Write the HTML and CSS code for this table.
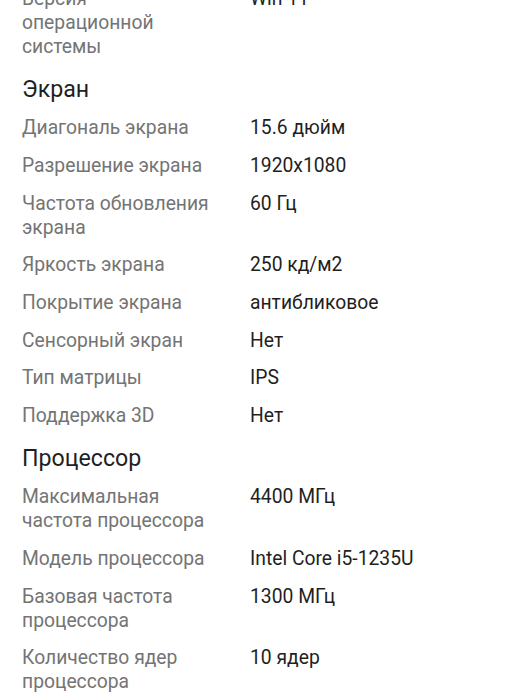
FILE: index.html
```html
<!DOCTYPE html>
<html lang="ru">
<head>
<meta charset="utf-8">
<link rel="stylesheet" href="styles.css">
</head>
<body>
<div class="specs">
  <section class="group">
    <div class="row"><div class="label">Версия операционной системы</div><div class="value">Win 11</div></div>
  </section>
  <section class="group">
    <h2 class="title">Экран</h2>
    <div class="row"><div class="label">Диагональ экрана</div><div class="value">15.6 дюйм</div></div>
    <div class="row"><div class="label">Разрешение экрана</div><div class="value">1920x1080</div></div>
    <div class="row"><div class="label">Частота обновления экрана</div><div class="value">60 Гц</div></div>
    <div class="row"><div class="label">Яркость экрана</div><div class="value">250 кд/м2</div></div>
    <div class="row"><div class="label">Покрытие экрана</div><div class="value">антибликовое</div></div>
    <div class="row"><div class="label">Сенсорный экран</div><div class="value">Нет</div></div>
    <div class="row"><div class="label">Тип матрицы</div><div class="value">IPS</div></div>
    <div class="row"><div class="label">Поддержка 3D</div><div class="value">Нет</div></div>
  </section>
  <section class="group">
    <h2 class="title">Процессор</h2>
    <div class="row"><div class="label">Максимальная частота процессора</div><div class="value">4400 МГц</div></div>
    <div class="row"><div class="label">Модель процессора</div><div class="value">Intel Core i5-1235U</div></div>
    <div class="row"><div class="label">Базовая частота процессора</div><div class="value">1300 МГц</div></div>
    <div class="row"><div class="label">Количество ядер процессора</div><div class="value">10 ядер</div></div>
  </section>
</div>
</body>
</html>
```

FILE: styles.css
```css
html, body {
  margin: 0;
  padding: 0;
  background: #ffffff;
}
body {
  font-family: Roboto, "Noto Sans", sans-serif;
  overflow: hidden;
}
.specs {
  margin-top: -13px;
  padding: 0 22px;
}
.title {
  margin: 0.5px 0 11px;
  font-size: 23.2px;
  line-height: 32px;
  font-weight: 400;
  color: #1f1f1f;
}
.row {
  display: grid;
  grid-template-columns: 196px 1fr;
  column-gap: 32px;
  padding-bottom: 13.7px;
  font-size: 19.3px;
  line-height: 24px;
}
.label {
  color: #747474;
}
.value {
  color: #1f1f1f;
}
```
